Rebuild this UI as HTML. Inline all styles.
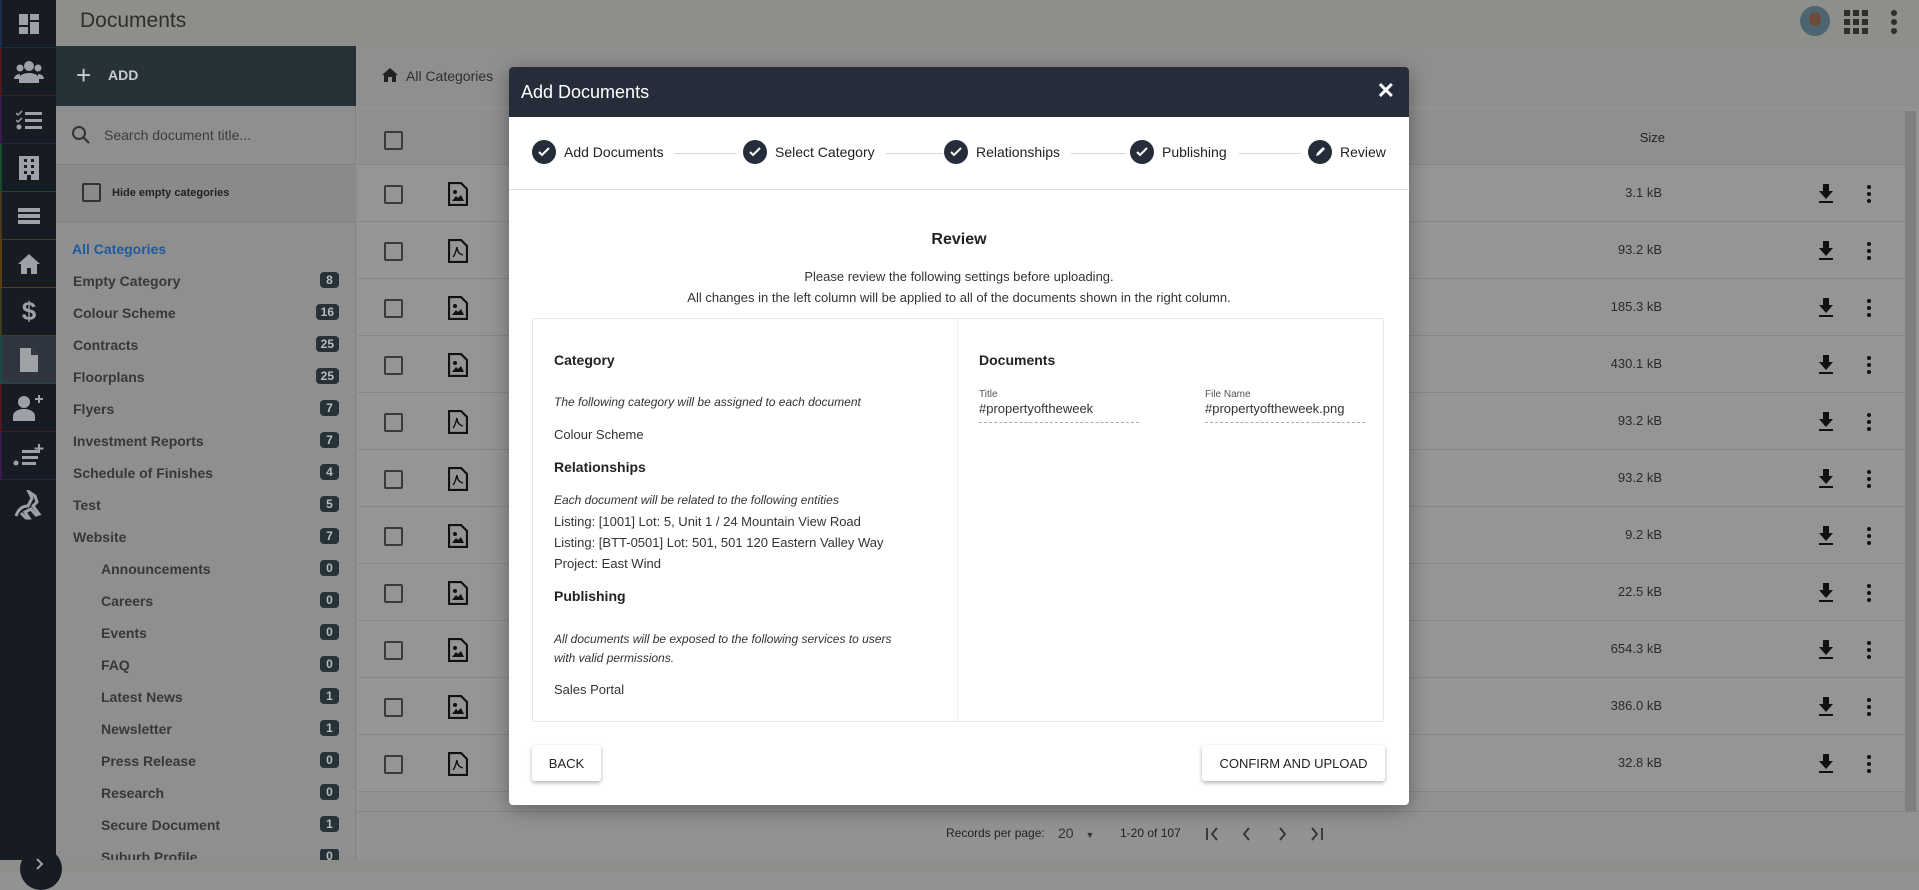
<!DOCTYPE html>
<html><head><meta charset="utf-8"><style>
*{box-sizing:border-box;margin:0;padding:0}
body{width:1919px;height:872px;overflow:hidden;background:#929292;font-family:"Liberation Sans",Arial,sans-serif;position:relative}
.abs{position:absolute}
#top{left:0;top:0;width:1919px;height:46px;background:#8e8f8a}
#rail{left:0;top:0;width:56px;height:872px;background:#161b24}
.ri{position:absolute;left:0;width:56px;height:48px;border-left:2px solid;border-bottom:1px solid #20262f;display:flex;align-items:center;justify-content:center}
#add{left:56px;top:46px;width:300px;height:60px;background:#263238;color:#c9ccce;font-weight:bold;font-size:14px}
#panel{left:56px;top:106px;width:300px;height:754px;background:#8f8f8f;border-right:1px solid #838383}
.cat{position:absolute;left:17px;width:266px;font-size:14px;font-weight:bold;color:#383838}
.cat.sub{left:45px;width:238px}
.cat span{position:absolute;right:0;top:-1px;background:#263238;color:#b9bcbe;font-size:12px;padding:1px 5px;border-radius:4px;min-width:19px;text-align:center}
.row{position:absolute;left:358px;width:1547px;height:57px;border-bottom:1px solid #858585;background:#959595}
.cb{position:absolute;left:26px;top:20px;width:19px;height:19px;border:2px solid #3a3a3a;border-radius:2px}
.sz{position:absolute;right:243px;top:20px;font-size:13px;color:#2a2a2a}
#modal{left:509px;top:67px;width:900px;height:738px;background:#fff;border-radius:4px;box-shadow:0 4px 20px rgba(0,0,0,.35);overflow:hidden}
#mh{height:50px;background:#262d3a;color:#fff;font-size:18px;padding:15px 12px}
.step{position:absolute;top:140px;display:flex;align-items:center;font-size:14px;color:#222}
.dot{width:24px;height:24px;border-radius:50%;background:#262d3a;margin-right:8px;display:flex;align-items:center;justify-content:center}
.ln{position:absolute;top:153px;height:1px;background:#d8d8d8}
.t{position:absolute;font-size:13px;color:#333}
.h{position:absolute;font-size:14px;font-weight:bold;color:#222}
.i{position:absolute;font-size:12px;font-style:italic;color:#333}
.btn{position:absolute;top:745px;height:36px;background:#fff;box-shadow:0 2px 4px rgba(0,0,0,.3);border-radius:3px;font-size:13px;color:#222;display:flex;align-items:center;justify-content:center}
</style></head><body>
<div id="top" class="abs"><div class="abs" style="left:80px;top:9px;font-size:21px;color:#2e2e2e">Documents</div>
<div class="abs" style="left:1800px;top:6px;width:30px;height:30px;border-radius:50%;background:#4d6570"><div class="abs" style="left:9px;top:6px;width:12px;height:14px;border-radius:50%;background:#6b4c3b"></div></div>
<svg class="abs" style="left:1843px;top:9px" width="26" height="26"><g fill="#2e2e2e"><rect x="1" y="1" width="6" height="6"/><rect x="10" y="1" width="6" height="6"/><rect x="19" y="1" width="6" height="6"/><rect x="1" y="10" width="6" height="6"/><rect x="10" y="10" width="6" height="6"/><rect x="19" y="10" width="6" height="6"/><rect x="1" y="19" width="6" height="6"/><rect x="10" y="19" width="6" height="6"/><rect x="19" y="19" width="6" height="6"/></g></svg>
<svg class="abs" style="left:1889px;top:9px" width="10" height="26"><g fill="#2e2e2e"><circle cx="5" cy="4" r="3"/><circle cx="5" cy="13" r="3"/><circle cx="5" cy="22" r="3"/></g></svg>
</div>
<div id="rail" class="abs">
<div class="ri" style="top:0;border-color:#1a2d4a"><svg width="20" height="20"><g fill="#9ea1a6"><rect x="0" y="0" width="9" height="11"/><rect x="11" y="0" width="9" height="6"/><rect x="11" y="8" width="9" height="12"/><rect x="0" y="13" width="9" height="7"/></g></svg></div>
<div class="ri" style="top:48px;border-color:#4a1a1e"><svg width="30" height="22"><g fill="#9ea1a6"><circle cx="15" cy="5" r="5"/><circle cx="6" cy="7" r="3.5"/><circle cx="24" cy="7" r="3.5"/><path d="M5 22v-4c0-4 5-6 10-6s10 2 10 6v4z"/><path d="M0 18c0-3 3-5 6-5v5z"/><path d="M30 18c0-3-3-5-6-5v5z"/></g></svg></div>
<div class="ri" style="top:96px;border-color:#3a1a4a"><svg width="26" height="20"><g fill="#9ea1a6"><rect x="9" y="2" width="17" height="3"/><rect x="9" y="9" width="17" height="3"/><rect x="9" y="16" width="17" height="3"/><circle cx="3" cy="17" r="2.5"/><path d="M0 3l2 2 4-4" stroke="#9ea1a6" stroke-width="1.5" fill="none"/><path d="M0 10l2 2 4-4" stroke="#9ea1a6" stroke-width="1.5" fill="none"/></g></svg></div>
<div class="ri" style="top:144px;border-color:#1a4a2e"><svg width="20" height="24"><rect x="0" y="0" width="20" height="24" fill="#9ea1a6"/><g fill="#161b24"><rect x="5" y="3" width="3" height="3"/><rect x="12" y="3" width="3" height="3"/><rect x="5" y="9" width="3" height="3"/><rect x="12" y="9" width="3" height="3"/><rect x="5" y="15" width="3" height="3"/><rect x="12" y="15" width="3" height="3"/><rect x="8" y="19" width="4" height="5"/></g></svg></div>
<div class="ri" style="top:192px;border-color:#4a3a1a"><svg width="22" height="16"><g fill="#9ea1a6"><rect y="0" width="22" height="4"/><rect y="6" width="22" height="4"/><rect y="12" width="22" height="4"/></g></svg></div>
<div class="ri" style="top:240px;border-color:#5a3e12"><svg width="22" height="20"><path fill="#9ea1a6" d="M11 0L0 10h3v10h6v-6h4v6h6V10h3z"/></svg></div>
<div class="ri" style="top:288px;border-color:#3e3e1a;color:#9ea1a6;font-size:26px;font-weight:bold">$</div>
<div class="ri" style="top:336px;border-color:#1a4a4a;background:#30363f"><svg width="18" height="24"><path fill="#9ea1a6" d="M0 0h11l7 7v17H0z"/><path fill="#30363f" d="M11 0v7h7z"/></svg></div>
<div class="ri" style="top:384px;border-color:#4a1a22"><svg width="32" height="26"><g fill="#9ea1a6"><circle cx="11" cy="7" r="6"/><path d="M0 26v-5c0-4 5-7 11-7s11 3 11 7v5z"/><rect x="25" y="0" width="2" height="8"/><rect x="22" y="3" width="8" height="2"/></g></svg></div>
<div class="ri" style="top:432px;border-color:#3a1a4a"><svg width="32" height="24"><g fill="#9ea1a6"><rect x="9" y="6" width="16" height="3"/><rect x="9" y="12" width="16" height="3"/><rect x="9" y="18" width="14" height="3"/><circle cx="3" cy="19" r="2.5"/><rect x="25" y="0" width="2" height="9"/><rect x="21.5" y="3.5" width="9" height="2"/></g></svg></div>
<div class="abs" style="left:12px;top:490px"><svg width="30" height="30"><path d="M4 26c2-6 6-10 12-10l4-8-3-6 6 4 2 6-4 4 6 8-3 1-5-6-6 3 4 6-3 0-5-5" fill="none" stroke="#9ea1a6" stroke-width="3"/></svg></div>
</div>
<div id="add" class="abs"><span class="abs" style="left:20px;top:14px;font-size:26px;font-weight:normal">+</span><span class="abs" style="left:52px;top:21px">ADD</span></div>
<div id="panel" class="abs">
<div class="abs" style="left:0;top:0;width:300px;height:59px;border-bottom:1px solid #808080"><svg class="abs" style="left:15px;top:19px" width="20" height="20"><circle cx="8" cy="8" r="6" fill="none" stroke="#333" stroke-width="2"/><path d="M12 12l6 6" stroke="#333" stroke-width="2.2"/></svg><span class="abs" style="left:48px;top:21px;font-size:14px;color:#3d3d3d">Search document title...</span></div>
<div class="abs" style="left:0;top:59px;width:300px;height:57px;background:#8a8a8a;border-bottom:1px solid #808080"><div class="abs" style="left:26px;top:18px;width:19px;height:19px;border:2px solid #333;border-radius:2px"></div><span class="abs" style="left:56px;top:22px;font-size:11px;font-weight:bold;color:#222">Hide empty categories</span></div>
<div class="abs" style="left:16px;top:135px;font-size:14px;font-weight:bold;color:#1d5aa0">All Categories</div>
<div class="cat" style="top:167px">Empty Category<span>8</span></div>
<div class="cat" style="top:199px">Colour Scheme<span>16</span></div>
<div class="cat" style="top:231px">Contracts<span>25</span></div>
<div class="cat" style="top:263px">Floorplans<span>25</span></div>
<div class="cat" style="top:295px">Flyers<span>7</span></div>
<div class="cat" style="top:327px">Investment Reports<span>7</span></div>
<div class="cat" style="top:359px">Schedule of Finishes<span>4</span></div>
<div class="cat" style="top:391px">Test<span>5</span></div>
<div class="cat" style="top:423px">Website<span>7</span></div>
<div class="cat sub" style="top:455px">Announcements<span>0</span></div>
<div class="cat sub" style="top:487px">Careers<span>0</span></div>
<div class="cat sub" style="top:519px">Events<span>0</span></div>
<div class="cat sub" style="top:551px">FAQ<span>0</span></div>
<div class="cat sub" style="top:583px">Latest News<span>1</span></div>
<div class="cat sub" style="top:615px">Newsletter<span>1</span></div>
<div class="cat sub" style="top:647px">Press Release<span>0</span></div>
<div class="cat sub" style="top:679px">Research<span>0</span></div>
<div class="cat sub" style="top:711px">Secure Document<span>1</span></div>
<div class="cat sub" style="top:743px;height:12px;overflow:hidden">Suburb Profile<span>0</span></div>
</div>
<div class="abs" style="left:356px;top:46px;width:1563px;height:60px;background:#8f8f8f"><svg class="abs" style="left:26px;top:22px" width="16" height="14"><path fill="#222" d="M8 0L0 7h2v7h4V9h4v5h4V7h2z"/></svg><span class="abs" style="left:50px;top:22px;font-size:14px;color:#2e2e2e">All Categories</span></div>
<div class="abs" style="left:1905px;top:111px;width:11px;height:700px;background:#7f7f7f"></div>
<div class="row" style="top:111px;height:54px;background:#8f8f8f"><div class="cb"></div><span class="abs" style="right:240px;top:19px;font-size:13px;color:#222">Size</span></div>
<div id="rows"></div>
<div class="abs" style="left:356px;top:811px;width:1563px;height:49px;background:#929292;border-top:1px solid #858585"></div>
<div class="abs" style="left:946px;top:826px;font-size:12px;color:#222">Records per page:</div>
<div class="abs" style="left:1058px;top:825px;font-size:14px;color:#333">20 <span style="font-size:9px;margin-left:8px">▼</span></div>
<div class="abs" style="left:1120px;top:826px;font-size:12px;color:#222">1-20 of 107</div>
<svg class="abs" style="left:1205px;top:825px" width="120" height="18"><g fill="none" stroke="#333" stroke-width="1.8"><path d="M2 3v12M12 3l-5 6 5 6"/><path d="M44 3l-5 6 5 6"/><path d="M75 3l5 6-5 6"/><path d="M107 3l5 6-5 6M117 3v12"/></g></svg>
<div class="abs" style="left:0;top:860px;width:1919px;height:12px;background:#8e8f8a"></div>
<div class="abs" style="left:20px;top:848px;width:42px;height:42px;border-radius:50%;background:#161b24"><svg class="abs" style="left:15px;top:9px" width="10" height="14"><path d="M2 2l5 5-5 5" stroke="#9ea1a6" stroke-width="2" fill="none"/></svg></div>
<script>
var s=["3.1 kB","93.2 kB","185.3 kB","430.1 kB","93.2 kB","93.2 kB","9.2 kB","22.5 kB","654.3 kB","386.0 kB","32.8 kB"];
var p=[0,1,0,0,1,1,0,0,0,0,1],h="";
for(var k=0;k<11;k++){var ic=p[k]?'<path d="M5 18c2-2 3-6 4-10 0 4 2 7 6 8" fill="none" stroke="#111" stroke-width="1.4"/>':'<circle cx="7" cy="10" r="2" fill="#111"/><path d="M4 19l4-5 2 2 3-3 3 6z" fill="#111"/>';
h+='<div class="row" style="top:'+(165+k*57)+'px"><div class="cb"></div><svg class="abs" style="left:90px;top:17px" width="20" height="24"><path d="M1 1h12l6 6v16H1z" fill="none" stroke="#111" stroke-width="2.2"/>'+ic+'</svg><span class="sz">'+s[k]+'</span><svg class="abs" style="left:1460px;top:19px" width="16" height="20"><path d="M5 0h6v7h4l-7 8-7-8h4z" fill="#111"/><rect x="1" y="17" width="14" height="2" fill="#111"/></svg><svg class="abs" style="left:1508px;top:19px" width="6" height="20"><g fill="#111"><circle cx="3" cy="3" r="2"/><circle cx="3" cy="10" r="2"/><circle cx="3" cy="17" r="2"/></g></svg></div>';}
document.getElementById("rows").innerHTML=h;
</script>
<div id="modal" class="abs">
<div id="mh">Add Documents<span class="abs" style="right:14px;top:11px;font-size:22px;font-weight:bold">✕</span></div>
<div class="abs" style="left:0;top:122px;width:900px;height:1px;background:#e0e0e0"></div>
</div>
<div class="abs" style="left:509px;top:67px;width:900px;height:738px">
<div class="step" style="left:23px;top:73px"><div class="dot"><svg width="12" height="10"><path d="M1 5l3 3 7-7" stroke="#fff" stroke-width="2" fill="none"/></svg></div>Add Documents</div>
<div class="ln" style="left:165px;top:86px;width:63px"></div>
<div class="step" style="left:234px;top:73px"><div class="dot"><svg width="12" height="10"><path d="M1 5l3 3 7-7" stroke="#fff" stroke-width="2" fill="none"/></svg></div>Select Category</div>
<div class="ln" style="left:377px;top:86px;width:57px"></div>
<div class="step" style="left:435px;top:73px"><div class="dot"><svg width="12" height="10"><path d="M1 5l3 3 7-7" stroke="#fff" stroke-width="2" fill="none"/></svg></div>Relationships</div>
<div class="ln" style="left:562px;top:86px;width:55px"></div>
<div class="step" style="left:621px;top:73px"><div class="dot"><svg width="12" height="10"><path d="M1 5l3 3 7-7" stroke="#fff" stroke-width="2" fill="none"/></svg></div>Publishing</div>
<div class="ln" style="left:730px;top:86px;width:62px"></div>
<div class="step" style="left:799px;top:73px"><div class="dot"><svg width="12" height="12"><path d="M2 10l1-3 6-6 2 2-6 6z" fill="#fff"/></svg></div>Review</div>
<div class="h" style="left:0;width:900px;text-align:center;top:164px;font-size:16px">Review</div>
<div class="t" style="left:0;width:900px;text-align:center;top:202px">Please review the following settings before uploading.</div>
<div class="t" style="left:0;width:900px;text-align:center;top:223px">All changes in the left column will be applied to all of the documents shown in the right column.</div>
<div class="abs" style="left:23px;top:251px;width:852px;height:404px;border:1px solid #e8e8e8"><div class="abs" style="left:424px;top:0;width:1px;height:402px;background:#eee"></div></div>
<div class="h" style="left:45px;top:285px">Category</div>
<div class="i" style="left:45px;top:328px">The following category will be assigned to each document</div>
<div class="t" style="left:45px;top:360px">Colour Scheme</div>
<div class="h" style="left:45px;top:392px">Relationships</div>
<div class="i" style="left:45px;top:426px">Each document will be related to the following entities</div>
<div class="t" style="left:45px;top:447px">Listing: [1001] Lot: 5, Unit 1 / 24 Mountain View Road</div>
<div class="t" style="left:45px;top:468px">Listing: [BTT-0501] Lot: 501, 501 120 Eastern Valley Way</div>
<div class="t" style="left:45px;top:489px">Project: East Wind</div>
<div class="h" style="left:45px;top:521px">Publishing</div>
<div class="i" style="left:45px;top:565px">All documents will be exposed to the following services to users</div>
<div class="i" style="left:45px;top:584px">with valid permissions.</div>
<div class="t" style="left:45px;top:615px">Sales Portal</div>
<div class="h" style="left:470px;top:285px">Documents</div>
<div class="abs" style="left:470px;top:322px;font-size:10px;color:#555">Title</div>
<div class="t" style="left:470px;top:334px">#propertyoftheweek</div>
<div class="abs" style="left:470px;top:355px;width:160px;border-top:1px dashed #aaa"></div>
<div class="abs" style="left:696px;top:322px;font-size:10px;color:#555">File Name</div>
<div class="t" style="left:696px;top:334px">#propertyoftheweek.png</div>
<div class="abs" style="left:696px;top:355px;width:160px;border-top:1px dashed #aaa"></div>
<div class="btn" style="left:23px;top:678px;width:69px">BACK</div>
<div class="btn" style="left:693px;top:678px;width:183px">CONFIRM AND UPLOAD</div>
</div>
</body></html>
